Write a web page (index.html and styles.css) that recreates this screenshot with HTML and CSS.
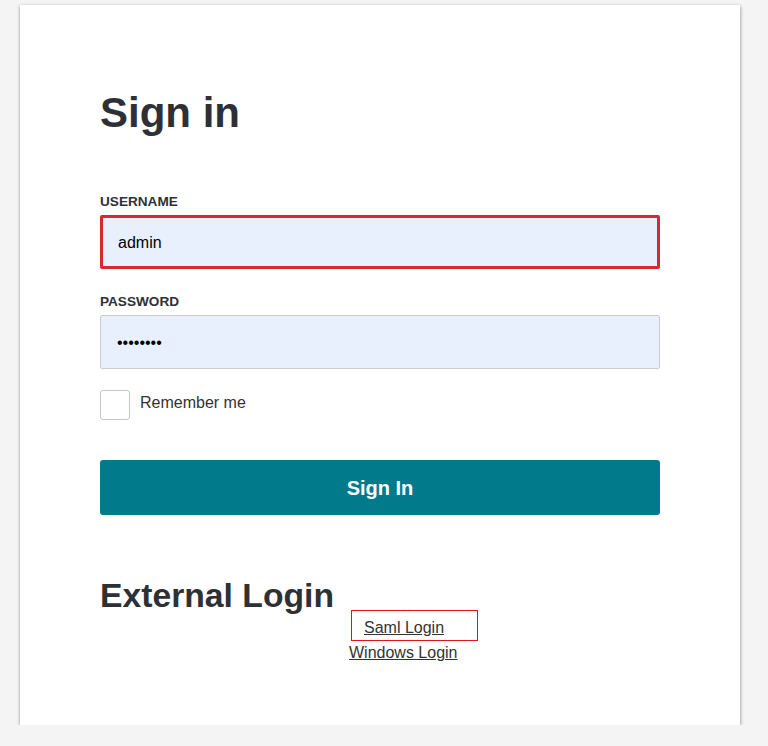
FILE: index.html
```html
<!DOCTYPE html>
<html lang="en">
<head>
<meta charset="utf-8">
<title>Sign in</title>
<link rel="stylesheet" href="styles.css">
</head>
<body>
<main class="card">
  <h1 class="title">Sign in</h1>
  <form class="form">
    <label class="label" for="username">USERNAME</label>
    <input class="input input-error" id="username" type="text" value="admin">
    <label class="label label-pw" for="password">PASSWORD</label>
    <input class="input" id="password" type="password" value="password">
    <div class="remember">
      <span class="checkbox"></span>
      <span class="remember-text">Remember me</span>
    </div>
    <button class="btn" type="button">Sign In</button>
  </form>
  <h2 class="subtitle">External Login</h2>
  <div class="ext">
    <a class="ext-link saml" href="#">Saml Login</a>
    <a class="ext-link windows" href="#">Windows Login</a>
  </div>
</main>
</body>
</html>
```
FILE: styles.css
```css
html, body {
  margin: 0;
  padding: 0;
}
body {
  background: #f4f4f4;
  font-family: "Liberation Sans", Arial, sans-serif;
  color: #2d3136;
}
.card {
  box-sizing: border-box;
  margin: 5px 0 0 20px;
  width: 720px;
  height: 720px;
  background: #fff;
  box-shadow: 0 1px 3px rgba(0, 0, 0, 0.35), 1px 2px 4px rgba(0, 0, 0, 0.12);
  padding: 84px 80px 0 80px;
}
.title {
  margin: 0;
  font-size: 42px;
  line-height: 48px;
  font-weight: bold;
  color: #2d3136;
}
.form {
  display: flex;
  flex-direction: column;
  margin-top: 57px;
}
.label {
  display: block;
  font-size: 13.6px;
  line-height: 16px;
  font-weight: bold;
  color: #2d3136;
}
.label-pw {
  margin-top: 25px;
}
.input {
  box-sizing: border-box;
  margin-top: 5px;
  width: 560px;
  height: 54px;
  background: #e8f0fe;
  border: 1px solid #c8ccd0;
  border-radius: 2px;
  padding: 2px 16px 0 16px;
  font-family: "Liberation Sans", Arial, sans-serif;
  font-size: 16px;
  color: #000;
  outline: none;
}
.input-error {
  border: 3px solid #d42a33;
  padding: 2px 15px 0 15px;
}
.remember {
  display: flex;
  align-items: flex-start;
  gap: 10px;
  margin-top: 21px;
}
.checkbox {
  box-sizing: border-box;
  width: 30px;
  height: 30px;
  border: 1px solid #c5c5c5;
  border-radius: 3px;
  background: #fff;
}
.remember-text {
  margin-top: 4px;
  font-size: 16px;
  line-height: 18px;
  color: #333;
}
.btn {
  margin-top: 40px;
  width: 560px;
  height: 55px;
  border: none;
  border-radius: 3px;
  background: #017a8b;
  color: #fff;
  font-family: "Liberation Sans", Arial, sans-serif;
  font-size: 20px;
  font-weight: bold;
  padding: 2px 0 0 0;
}
.subtitle {
  margin: 65px 0 0 0;
  font-size: 33.7px;
  line-height: 30px;
  font-weight: bold;
  color: #2d3136;
}
.ext {
  display: flex;
  flex-direction: column;
  align-items: flex-start;
  padding-left: 249px;
}
.ext-link {
  color: #333;
  font-size: 16px;
  text-decoration: underline;
}
.saml {
  box-sizing: border-box;
  display: block;
  margin-left: 2px;
  width: 127px;
  height: 31px;
  border: 1px solid #e0141e;
  padding: 2px 12px 0 12px;
  line-height: 29px;
}
.windows {
  display: block;
  margin-top: 3px;
  line-height: 18px;
}
```
